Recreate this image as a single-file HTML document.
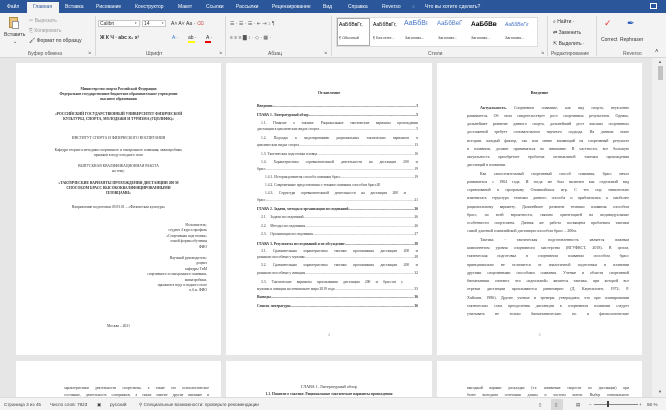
<!DOCTYPE html>
<html><head><meta charset="utf-8"><style>
*{margin:0;padding:0;box-sizing:border-box}
body{width:666px;height:410px;overflow:hidden;position:relative;background:#e6e6e6;font-family:"Liberation Sans",sans-serif}
.a{position:absolute;white-space:nowrap}
#tabs{position:absolute;left:0;top:0;width:666px;height:13px;background:#2b579a}
#tabs .a{color:#fff;font-size:5px;top:4px}
#rib{position:absolute;left:0;top:13px;width:666px;height:45px;background:#f3f3f3;border-bottom:1px solid #d6d6d6}
#rib .a{font-size:5px;color:#333}
.lbl{top:38px;color:#555!important}
.sep{position:absolute;top:3px;width:1px;height:40px;background:#d8d8d8}
.box{position:absolute;background:#fff;border:1px solid #c8c8c8}
.page{position:absolute;background:#fff}
.page .a{font-family:"Liberation Serif",serif;font-size:3.7px;color:#333}
.c{text-align:center}
.j{text-align:justify;text-align-last:justify;overflow:hidden;height:5px}
.b{font-weight:bold}
.t{position:absolute;height:5px;display:flex;white-space:nowrap;overflow:hidden}
.t .d{flex:1;overflow:hidden}
.t .d::after{content:"........................................................................................................................................................................"}
#status{position:absolute;left:0;top:397px;width:666px;height:13px;background:#f3f3f3;border-top:1px solid #dcdcdc}
#status .a{font-size:4.6px;color:#444;top:4px}
</style></head><body>
<div id="tabs">
<div class="a" style="left:7px">Файл</div>
<div style="position:absolute;left:27px;top:2px;width:32px;height:11px;background:#f3f3f3"></div>
<div class="a" style="left:33px;color:#2b579a!important">Главная</div>
<div class="a" style="left:65px">Вставка</div>
<div class="a" style="left:96px">Рисование</div>
<div class="a" style="left:135px">Конструктор</div>
<div class="a" style="left:178px">Макет</div>
<div class="a" style="left:206px">Ссылки</div>
<div class="a" style="left:236px">Рассылки</div>
<div class="a" style="left:272px">Рецензирование</div>
<div class="a" style="left:323px">Вид</div>
<div class="a" style="left:348px">Справка</div>
<div class="a" style="left:382px">Reverso</div>
<div class="a" style="left:412px">◌</div>
<div class="a" style="left:425px">Что вы хотите сделать?</div>
<div style="position:absolute;left:650px;top:3px;width:7px;height:6px;border:1px solid #fff"></div>
</div>
<div id="rib">
<div style="position:absolute;left:9px;top:4px;width:9px;height:11px;background:#e8c27a;border:1px solid #b08a40"></div>
<div style="position:absolute;left:12px;top:8px;width:7px;height:8px;background:#fff;border:1px solid #999"></div>
<div class="a" style="left:4px;top:19px">Вставить</div>
<div class="a" style="left:13px;top:26px">⌄</div>
<div class="a" style="left:29px;top:5px;color:#999">✂ Вырезать</div>
<div class="a" style="left:29px;top:15px;color:#999">⎘ Копировать</div>
<div class="a" style="left:29px;top:25px">🖌 Формат по образцу</div>
<div class="a lbl" style="left:28px">Буфер обмена</div>
<div class="a" style="left:88px;top:38px;font-size:3.5px">⇲</div>
<div class="sep" style="left:95px"></div>
<div class="box" style="left:98px;top:7px;width:42px;height:7px"></div>
<div class="a" style="left:100px;top:8px">Calibri</div>
<div class="a" style="left:135px;top:8px;font-size:3px">▾</div>
<div class="box" style="left:142px;top:7px;width:24px;height:7px"></div>
<div class="a" style="left:144px;top:8px">14</div>
<div class="a" style="left:162px;top:8px;font-size:3px">▾</div>
<div class="a" style="left:171px;top:8px">A˄ A˅ Аа · <span style="color:#c55">⌫</span></div>
<div class="a" style="left:100px;top:22px;font-weight:bold">Ж  К  Ч · abc x₂ x²</div>
<div class="a" style="left:172px;top:22px;color:#3a7bd5">A ·</div>
<div style="position:absolute;left:188px;top:28px;width:7px;height:2px;background:#ff0"></div>
<div class="a" style="left:188px;top:22px">ab ·</div>
<div style="position:absolute;left:205px;top:28px;width:6px;height:2px;background:#e00"></div>
<div class="a" style="left:206px;top:22px">A ·</div>
<div class="a lbl" style="left:146px">Шрифт</div>
<div class="a" style="left:219px;top:38px;font-size:3.5px">⇲</div>
<div class="sep" style="left:225px"></div>
<div class="a" style="left:230px;top:8px;color:#555">☰ · ☰ · ☰ ·  ⇤ ⇥  ↕ ¶</div>
<div class="a" style="left:230px;top:22px;color:#555">≡ ≡ ≡ ▇ ↕ ·  ◇ · ▦ ·</div>
<div class="a lbl" style="left:268px">Абзац</div>
<div class="a" style="left:324px;top:38px;font-size:3.5px">⇲</div>
<div class="sep" style="left:331px"></div>
<div class="box" style="left:336px;top:4px;width:202px;height:30px;border-color:#ddd"></div>
<div style="position:absolute;left:337px;top:5px;width:33px;height:28px;border:1px solid #aaa"></div>
<div class="a" style="left:339px;top:9px;font-size:5px;color:#000">АаБбВвГг,</div>
<div class="a" style="left:339px;top:23px;font-size:3.8px">¶ Обычный</div>
<div class="a" style="left:373px;top:9px;font-size:5px;color:#000">АаБбВвГг,</div>
<div class="a" style="left:373px;top:23px;font-size:3.8px">¶ Без инте...</div>
<div class="a" style="left:404px;top:7px;font-size:7px;color:#4472c4">АаБбВı</div>
<div class="a" style="left:405px;top:23px;font-size:3.8px">Заголово...</div>
<div class="a" style="left:437px;top:8px;font-size:6px;color:#4472c4">АаБбВеГ</div>
<div class="a" style="left:438px;top:23px;font-size:3.8px">Заголово...</div>
<div class="a" style="left:471px;top:8px;font-size:6.5px;font-weight:bold;color:#000">АаБбВв</div>
<div class="a" style="left:471px;top:23px;font-size:3.8px">Заголово...</div>
<div class="a" style="left:505px;top:9px;font-size:5px;color:#4472c4;font-style:italic">АаБбВеГг</div>
<div class="a" style="left:505px;top:23px;font-size:3.8px">Заголово...</div>
<div class="a lbl" style="left:428px">Стили</div>
<div class="a" style="left:541px;top:38px;font-size:3.5px">⇲</div>
<div class="sep" style="left:547px"></div>
<div class="a" style="left:553px;top:6px">⌕ Найти ·</div>
<div class="a" style="left:553px;top:17px">⇄ Заменить</div>
<div class="a" style="left:553px;top:28px">⇱ Выделить ·</div>
<div class="a lbl" style="left:551px">Редактирование</div>
<div class="sep" style="left:596px"></div>
<div class="a" style="left:604px;top:5px;font-size:9px;color:#e33">✓</div>
<div class="a" style="left:627px;top:5px;font-size:9px;color:#1a4fb5">✒</div>
<div class="a" style="left:601px;top:24px">Correct</div>
<div class="a" style="left:620px;top:24px">Rephraser</div>
<div class="a lbl" style="left:623px">Reverso</div>
<div class="a" style="left:655px;top:36px;font-size:6px">˄</div>
</div>

<div style="position:absolute;left:652px;top:58px;width:14px;height:339px;background:#f0f0f0"></div>
<div class="a" style="left:658px;top:59px;font-size:4px;color:#555">▲</div>
<div style="position:absolute;left:658px;top:66px;width:5px;height:14px;background:#c2c2c2"></div>
<div class="a" style="left:658px;top:389px;font-size:4px;color:#555">▼</div>

<!-- page 1 -->
<div class="page" style="left:16px;top:63px;width:205px;height:292px">
<div class="a c b" style="left:0;width:205px;top:24px">Министерство спорта Российской Федерации</div>
<div class="a c b" style="left:0;width:205px;top:29px">Федеральное государственное бюджетное образовательное учреждение</div>
<div class="a c b" style="left:0;width:205px;top:34px">высшего образования</div>
<div class="a c b" style="left:0;width:205px;top:49px">«РОССИЙСКИЙ ГОСУДАРСТВЕННЫЙ УНИВЕРСИТЕТ ФИЗИЧЕСКОЙ</div>
<div class="a c b" style="left:0;width:205px;top:54px">КУЛЬТУРЫ, СПОРТА, МОЛОДЕЖИ И ТУРИЗМА (ГЦОЛИФК)»</div>
<div class="a c" style="left:0;width:205px;top:73px">ИНСТИТУТ СПОРТА И ФИЗИЧЕСКОГО ВОСПИТАНИЯ</div>
<div class="a c" style="left:0;width:205px;top:85px">Кафедра теории и методики спортивного и синхронного плавания, аквааэробики,</div>
<div class="a c" style="left:0;width:205px;top:90px">прыжков в воду и водного поло</div>
<div class="a c" style="left:0;width:205px;top:101px">ВЫПУСКНАЯ КВАЛИФИКАЦИОННАЯ РАБОТА</div>
<div class="a c" style="left:0;width:205px;top:106px">на тему:</div>
<div class="a c b" style="left:0;width:205px;top:118px">«ТАКТИЧЕСКИЕ ВАРИАНТЫ ПРОХОЖДЕНИЯ ДИСТАНЦИИ 200 М</div>
<div class="a c b" style="left:0;width:205px;top:123px">СПОСОБОМ БРАСС ВЫСОКОКВАЛИФИЦИРОВАННЫМИ</div>
<div class="a c b" style="left:0;width:205px;top:128px">ПЛОВЦАМИ»</div>
<div class="a c" style="left:0;width:205px;top:142px">Направление подготовки 49.03.01 – «Физическая культура»</div>
<div class="a" style="right:14px;top:160px;text-align:right;line-height:5.4px">Исполнитель:<br>студент 4 курса профиль<br>«Спортивная подготовка»<br>очной формы обучения<br>ФИО</div>
<div class="a" style="right:14px;top:193px;text-align:right;line-height:5.4px">Научный руководитель:<br>доцент<br>кафедры ТиМ<br>спортивного и синхронного плавания,<br>аквааэробики,<br>прыжков в воду и водного поло<br>к.б.н. ФИО</div>
<div class="a c" style="left:0;width:205px;top:261px">Москва – 2021</div>
</div>

<!-- page 2 -->
<div class="page" style="left:226px;top:63px;width:206px;height:292px">
<div class="a c b" style="left:0;width:206px;top:27px;font-size:4.2px">Оглавление</div>
<div style="position:absolute;left:31px;top:41px;width:161px;font-family:'Liberation Serif',serif;font-size:3.7px;color:#333;line-height:5px">
<div class="t b" style="top:0;width:161px"><span>Введение</span><span class="d"></span><span>3</span></div>
<div class="t b" style="top:9px;width:161px"><span>ГЛАВА 1. Литературный обзор</span><span class="d"></span><span>5</span></div>
<div style="position:absolute;top:17px;left:4px;width:157px" class="j">1.1. Понятие о тактике. Рациональные тактические варианты прохождения</div>
<div class="t" style="top:23px;width:161px"><span>дистанции в циклических видах спорта</span><span class="d"></span><span>5</span></div>
<div style="position:absolute;top:32px;left:4px;width:157px" class="j">1.2. Подходы к моделированию рациональных тактических вариантов в</div>
<div class="t" style="top:39px;width:161px"><span>циклических видах спорта</span><span class="d"></span><span>13</span></div>
<div class="t" style="top:48px;left:4px;width:157px"><span>1.3. Тактическая подготовка пловца</span><span class="d"></span><span>16</span></div>
<div style="position:absolute;top:56px;left:4px;width:157px" class="j">1.4. Характеристика соревновательной деятельности на дистанции 200 м</div>
<div class="t" style="top:63px;width:161px"><span>брасс</span><span class="d"></span><span>19</span></div>
<div class="t" style="top:71px;left:8px;width:153px"><span>1.4.1. История развития способа плавания брасс</span><span class="d"></span><span>19</span></div>
<div class="t" style="top:79px;left:8px;width:153px"><span>1.4.2. Современные представления о технике плавания способом брасс</span><span>20</span></div>
<div style="position:absolute;top:87px;left:8px;width:141px" class="j">1.4.3. Структура соревновательной деятельности на дистанции 200 м</div>
<div class="t" style="top:94px;width:161px"><span>брасс</span><span class="d"></span><span>21</span></div>
<div class="t b" style="top:103px;width:161px"><span>ГЛАВА 2. Задачи, методы и организация исследований</span><span class="d"></span><span>26</span></div>
<div class="t" style="top:111px;left:4px;width:157px"><span>2.1.&nbsp;&nbsp;&nbsp;&nbsp;Задачи исследований</span><span class="d"></span><span>26</span></div>
<div class="t" style="top:120px;left:4px;width:157px"><span>2.2.&nbsp;&nbsp;&nbsp;&nbsp;Методы исследования</span><span class="d"></span><span>26</span></div>
<div class="t" style="top:128px;left:4px;width:157px"><span>2.3.&nbsp;&nbsp;&nbsp;&nbsp;Организация исследования</span><span class="d"></span><span>27</span></div>
<div class="t b" style="top:138px;width:161px"><span>ГЛАВА 3. Результаты исследований и их обсуждение</span><span class="d"></span><span>28</span></div>
<div style="position:absolute;top:145px;left:4px;width:157px" class="j">3.1. Сравнительная характеристика тактики проплывания дистанции 200 м</div>
<div class="t" style="top:151px;width:161px"><span>разными способами у мужчин</span><span class="d"></span><span>28</span></div>
<div style="position:absolute;top:159px;left:4px;width:157px" class="j">3.2. Сравнительная характеристика тактики проплывания дистанции 200 м</div>
<div class="t" style="top:167px;width:161px"><span>разными способами у женщин</span><span class="d"></span><span>32</span></div>
<div style="position:absolute;top:176px;left:4px;width:142px" class="j">3.3. Тактические варианты проплывания дистанции 200 м брассом у</div>
<div class="t" style="top:183px;width:161px"><span>мужчин и женщин на чемпионате мира 2019 года</span><span class="d"></span><span>33</span></div>
<div class="t b" style="top:191px;width:161px"><span>Выводы</span><span class="d"></span><span>36</span></div>
<div class="t b" style="top:200px;width:161px"><span>Список литературы</span><span class="d"></span><span>36</span></div>
</div>
<div class="a c" style="left:0;width:206px;top:270px;color:#888">2</div>
</div>

<!-- page 3 -->
<div class="page" style="left:437px;top:63px;width:205px;height:292px">
<div class="a c b" style="left:0;width:205px;top:27px;font-size:4.2px">Введение</div>
<div style="position:absolute;left:30px;top:42px;width:162px;font-family:'Liberation Serif',serif;font-size:4px;color:#333">
<div class="j" style="position:absolute;top:0;left:13px;width:149px"><b>Актуальность.</b> Спортивное плавание, как вид спорта, неуклонно</div>
<div class="j" style="position:absolute;top:8px;width:162px">развивается. Об этом свидетельствует рост спортивных результатов. Однако,</div>
<div class="j" style="position:absolute;top:16px;width:162px">дальнейшее развитие данного спорта, дальнейший рост высших спортивных</div>
<div class="j" style="position:absolute;top:24px;width:162px">достижений требует основательного научного подхода. На данном этапе</div>
<div class="j" style="position:absolute;top:33px;width:162px">истории, каждый фактор, так или иначе влияющий на спортивный результат</div>
<div class="j" style="position:absolute;top:41px;width:162px">в плавании, должен приниматься во внимание. В частности, все большую</div>
<div class="j" style="position:absolute;top:49px;width:162px">актуальность приобретает проблема оптимальной тактики прохождения</div>
<div style="position:absolute;top:57px;width:162px;white-space:nowrap">дистанций в плавании.</div>
<div class="j" style="position:absolute;top:66px;left:13px;width:149px">Как самостоятельный спортивный способ плавания, брасс начал</div>
<div class="j" style="position:absolute;top:74px;width:162px">развиваться с 1904 года. И тогда же был включен как отдельный вид</div>
<div class="j" style="position:absolute;top:82px;width:162px">соревнований в программу Олимпийских игр. С тех пор значительно</div>
<div class="j" style="position:absolute;top:90px;width:162px">изменилась структура техники данного способа и приблизилась к наиболее</div>
<div class="j" style="position:absolute;top:99px;width:162px">рациональному варианту. Дальнейшее развитие техники плавания способом</div>
<div class="j" style="position:absolute;top:107px;width:162px">брасс, по всей вероятности, связано ориентацией на индивидуальные</div>
<div class="j" style="position:absolute;top:115px;width:162px">особенности спортсмена. Данная же работа посвящена проблемам тактики</div>
<div style="position:absolute;top:123px;width:162px;white-space:nowrap">самой длинной олимпийской дистанции способом брасс – 200м.</div>
<div class="j" style="position:absolute;top:132px;left:13px;width:149px">Тактика - тактическая подготовленность является важным</div>
<div class="j" style="position:absolute;top:140px;width:162px">компонентом уровня спортивного мастерства (ВГУФКСТ, 2018). В целом,</div>
<div class="j" style="position:absolute;top:148px;width:162px">тактическая подготовка в спортивном плавании способом брасс</div>
<div class="j" style="position:absolute;top:157px;width:162px">принципиально не отличается от аналогичной подготовки в плавании</div>
<div class="j" style="position:absolute;top:165px;width:162px">другими спортивными способами плавания. Ученые в области спортивной</div>
<div class="j" style="position:absolute;top:173px;width:162px">биомеханики считают, что «идеальной» является тактика, при которой все</div>
<div class="j" style="position:absolute;top:181px;width:162px">отрезки дистанции проплываются равномерно (Д. Каунсилмен, 1972; Р.</div>
<div class="j" style="position:absolute;top:190px;width:162px">Хайошн, 1986). Другие ученые и тренеры утверждают, что при планировании</div>
<div class="j" style="position:absolute;top:198px;width:162px">тактических схем преодоления дистанции в спортивном плавании следует</div>
<div class="j" style="position:absolute;top:206px;width:162px">учитывать не только биомеханические, но и физиологические</div>
</div>
<div class="a c" style="left:0;width:205px;top:270px;color:#888">3</div>
</div>

<!-- second row -->
<div class="page" style="left:16px;top:361px;width:205px;height:40px">
<div class="j a" style="left:48px;top:25px;width:145px">характеристики деятельности спортсмена, а также его психологическое</div>
<div class="j a" style="left:48px;top:32px;width:145px">состояние, деятельность соперников, а также многие другие внешние и</div>
</div>
<div class="page" style="left:226px;top:361px;width:206px;height:40px">
<div class="a c" style="left:0;width:206px;top:23px;font-size:4.2px">ГЛАВА 1. Литературный обзор</div>
<div class="a c b" style="left:0;width:206px;top:31px">1.1. Понятие о тактике. Рациональные тактические варианты прохождения</div>
</div>
<div class="page" style="left:437px;top:361px;width:205px;height:40px">
<div class="j a" style="left:30px;top:25px;width:162px">выгодный вариант раскладки (т.е. изменение скорости по дистанции) при</div>
<div class="j a" style="left:30px;top:32px;width:162px">более выгодном сочетании длины и частоты шагов. Выбор оптимального</div>
</div>

<div id="status">
<div class="a" style="left:4px">Страница 3 из 45</div>
<div class="a" style="left:50px">Число слов: 7923</div>
<div class="a" style="left:97px">▣</div>
<div class="a" style="left:110px">русский</div>
<div class="a" style="left:139px">⚲ Специальные возможности: проверьте рекомендации</div>
<div style="position:absolute;left:551px;top:1px;width:12px;height:11px;background:#d8d8d8"></div>
<div class="a" style="left:539px">▯</div>
<div class="a" style="left:555px">▯</div>
<div class="a" style="left:576px">▤</div>
<div class="a" style="left:589px">–</div>
<div style="position:absolute;left:594px;top:6px;width:44px;height:1px;background:#888"></div>
<div style="position:absolute;left:607px;top:3px;width:2px;height:6px;background:#444"></div>
<div class="a" style="left:639px">+</div>
<div class="a" style="left:647px">56 %</div>
</div>
</body></html>
